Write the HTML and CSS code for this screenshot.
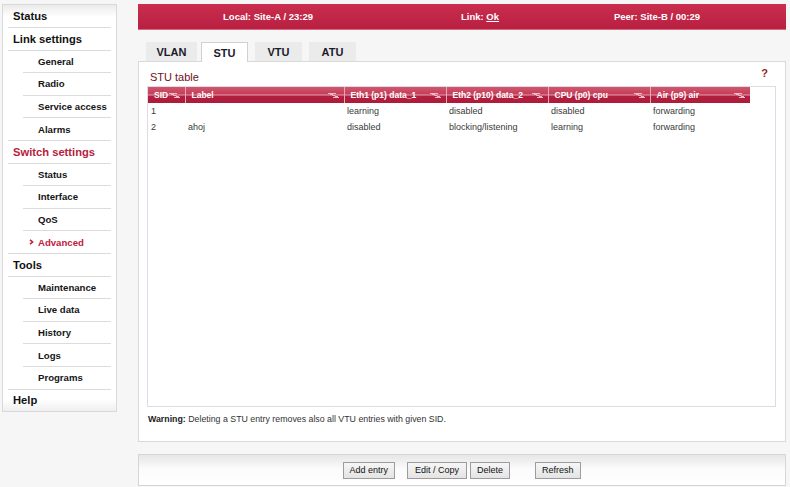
FILE: index.html
```html
<!DOCTYPE html>
<html>
<head>
<meta charset="utf-8">
<link rel="stylesheet" href="styles.css">
</head>
<body>
<div class="page">
  <nav class="sidebar">
    <div class="item top first">Status</div>
    <div class="item top full">Link settings</div>
    <div class="item sub full">General</div>
    <div class="item sub">Radio</div>
    <div class="item sub">Service access</div>
    <div class="item sub">Alarms</div>
    <div class="item top full active-group">Switch settings</div>
    <div class="item sub full">Status</div>
    <div class="item sub">Interface</div>
    <div class="item sub">QoS</div>
    <div class="item sub current"><svg class="chev" width="5" height="6" viewBox="0 0 5 6"><path d="M1 0.8 L3.6 3 L1 5.2" fill="none" stroke="#c0203a" stroke-width="1.6"/></svg>Advanced</div>
    <div class="item top full">Tools</div>
    <div class="item sub full">Maintenance</div>
    <div class="item sub">Live data</div>
    <div class="item sub">History</div>
    <div class="item sub">Logs</div>
    <div class="item sub">Programs</div>
    <div class="item top">Help</div>
  </nav>
  <main class="main">
    <header class="statusbar">
      <span>Local: Site-A / 23:29</span>
      <span>Link: <u>Ok</u></span>
      <span>Peer: Site-B / 00:29</span>
    </header>
    <div class="tabs">
      <div class="tab t-vlan">VLAN</div>
      <div class="tab active">STU</div>
      <div class="tab">VTU</div>
      <div class="tab">ATU</div>
    </div>
    <section class="panel">
      <div class="panel-head">
        <span class="title">STU table</span>
        <span class="help">?</span>
      </div>
      <div class="frame">
        <table class="grid">
          <colgroup>
            <col class="c-sid"><col class="c-label"><col class="c-port"><col class="c-port"><col class="c-port"><col class="c-air">
          </colgroup>
          <thead>
            <tr>
              <th><span>SID</span><i class="sort"></i></th>
              <th><span>Label</span><i class="sort"></i></th>
              <th><span>Eth1 (p1) data_1</span><i class="sort"></i></th>
              <th><span>Eth2 (p10) data_2</span><i class="sort"></i></th>
              <th><span>CPU (p0) cpu</span><i class="sort"></i></th>
              <th><span>Air (p9) air</span><i class="sort"></i></th>
            </tr>
          </thead>
          <tbody>
            <tr><td>1</td><td></td><td>learning</td><td>disabled</td><td>disabled</td><td>forwarding</td></tr>
            <tr><td>2</td><td>ahoj</td><td>disabled</td><td>blocking/listening</td><td>learning</td><td>forwarding</td></tr>
          </tbody>
        </table>
      </div>
      <p class="warning"><b>Warning:</b> Deleting a STU entry removes also all VTU entries with given SID.</p>
    </section>
    <div class="buttons">
      <button class="btn">Add entry</button>
      <button class="btn b-edit">Edit / Copy</button>
      <button class="btn b-del">Delete</button>
      <button class="btn b-ref">Refresh</button>
    </div>
  </main>
</div>
</body>
</html>
```
FILE: styles.css
```css
html, body {
  margin: 0;
  padding: 0;
  background: #f6f6f6;
  font-family: "Liberation Sans", Arial, sans-serif;
  color: #1a1a1a;
}
.page {
  display: flex;
  align-items: flex-start;
  padding: 4px 0 0 2px;
}
.sidebar {
  border: 1px solid #d9d9d9;
  padding: 0 5px 0 5px;
  box-sizing: border-box;
  width: 115px;
  background: linear-gradient(#ebebeb, #ffffff 12px, #ffffff calc(100% - 12px), #efefef);
}
.item {
  position: relative;
  height: 22.6px;
  display: flex;
  align-items: center;
  box-sizing: border-box;
  border-top: 1px solid #dcdcdc;
  white-space: nowrap;
}
.item.first { border-top: none; height: 22px; padding-bottom: 1px; }
.item.top {
  font-size: 11.2px;
  font-weight: bold;
  padding-left: 5px;
  color: #111;
}
.item.sub {
  font-size: 9.6px;
  font-weight: bold;
  margin-left: 15px;
  padding-left: 15px;
  color: #151515;
}
.item.sub.full {
  margin-left: 0;
  padding-left: 30px;
}
.item.active-group { color: #b7213d; }
.item.current { color: #c0203a; }
.chev {
  position: absolute;
  left: 6px;
  top: 8px;
}
.main {
  margin-left: 21px;
  width: 648px;
}
.statusbar {
  height: 26px;
  box-sizing: border-box;
  background: linear-gradient(#cb2e4f, #b81f40);
  border-bottom: 1px solid #d86a80;
  display: grid;
  grid-template-columns: 260px 164px 190px 1fr;
  align-items: center;
  justify-items: center;
  color: #fff;
  font-size: 9.5px;
  font-weight: bold;
}
.tabs {
  display: flex;
  margin-top: 12px;
  padding-left: 8px;
  height: 19px;
  align-items: flex-end;
}
.tab {
  width: 47px;
  height: 19px;
  box-sizing: border-box;
  background: #ebebeb;
  display: flex;
  align-items: center;
  justify-content: center;
  font-size: 11px;
  font-weight: bold;
  color: #1b1b2a;
  margin-right: 7px;
}
.tab.t-vlan { width: 51px; margin-right: 4px; }
.tab.active {
  background: #fff;
  border: 1px solid #d0d0d0;
  border-bottom: none;
  height: 20px;
  margin-bottom: -1px;
  position: relative;
  z-index: 1;
}
.panel {
  background: #fff;
  border: 1px solid #d9d9d9;
  height: 381px;
  box-sizing: border-box;
  padding: 0 9px 0 8px;
}
.panel-head {
  height: 24px;
  display: flex;
  justify-content: space-between;
  align-items: flex-end;
  padding: 0 8px 0 3px;
}
.title {
  font-size: 11px;
  color: #6e1222;
  line-height: 14px;
  padding-bottom: 2px;
}
.help {
  font-size: 11px;
  font-weight: bold;
  color: #8e2a12;
  padding-bottom: 7px;
}
.frame {
  border: 1px solid #dcdce6;
  height: 321px;
  box-sizing: border-box;
}
.grid {
  border-collapse: collapse;
  table-layout: fixed;
  width: 602px;
  font-size: 9px;
}
.c-sid { width: 37px; }
.c-label { width: 159px; }
.c-port { width: 102px; }
.c-air { width: 100px; }
.grid th {
  height: 16px;
  padding: 0 4px 0 6px;
  text-align: left;
  color: #fff;
  font-size: 8.5px;
  font-weight: bold;
  background: linear-gradient(#d0566e 0%, #c53e5a 44%, #e8a3b1 50%, #b3203f 56%, #ae1b3a 100%);
  border-left: 1px solid #e6aab6;
  position: relative;
  white-space: nowrap;
}
.grid th:first-child { border-left: none; }
.sort {
  position: absolute;
  right: 5px;
  top: 6px;
  width: 11px;
  height: 5px;
  background:
    linear-gradient(#f2b8c4, #f2b8c4) 0 0 / 8px 1px no-repeat,
    linear-gradient(#f2b8c4, #f2b8c4) 5px 4px / 6px 1px no-repeat,
    linear-gradient(24deg, transparent 44%, #f2b8c4 46%, #f2b8c4 58%, transparent 60%) 0 0 / 11px 5px no-repeat;
}
.grid td {
  height: 16px;
  padding: 0 3px;
  color: #3a3a3a;
  white-space: nowrap;
}
.warning {
  margin: 7px 0 0 1px;
  font-size: 8.8px;
  color: #333;
}
.warning b { color: #222; }
.buttons {
  margin-top: 12px;
  height: 32px;
  box-sizing: border-box;
  border: 1px solid #d6d6d6;
  background: linear-gradient(#e6e6e6, #fbfbfb 45%, #ffffff);
  display: flex;
  align-items: center;
  justify-content: center;
}
.btn {
  font-family: "Liberation Sans", Arial, sans-serif;
  font-size: 9px;
  height: 17px;
  padding: 0 6px;
  border: 1px solid #9c9c9c;
  background: linear-gradient(#f6f6f6, #e4e4e4);
  color: #111;
  margin: 0;
}
.btn:first-child { padding: 0 6px 0 5px; }
.b-edit { margin-left: 12px; padding: 0 7px; }
.b-del { margin-left: 3px; }
.b-ref { margin-left: 25px; }
```
